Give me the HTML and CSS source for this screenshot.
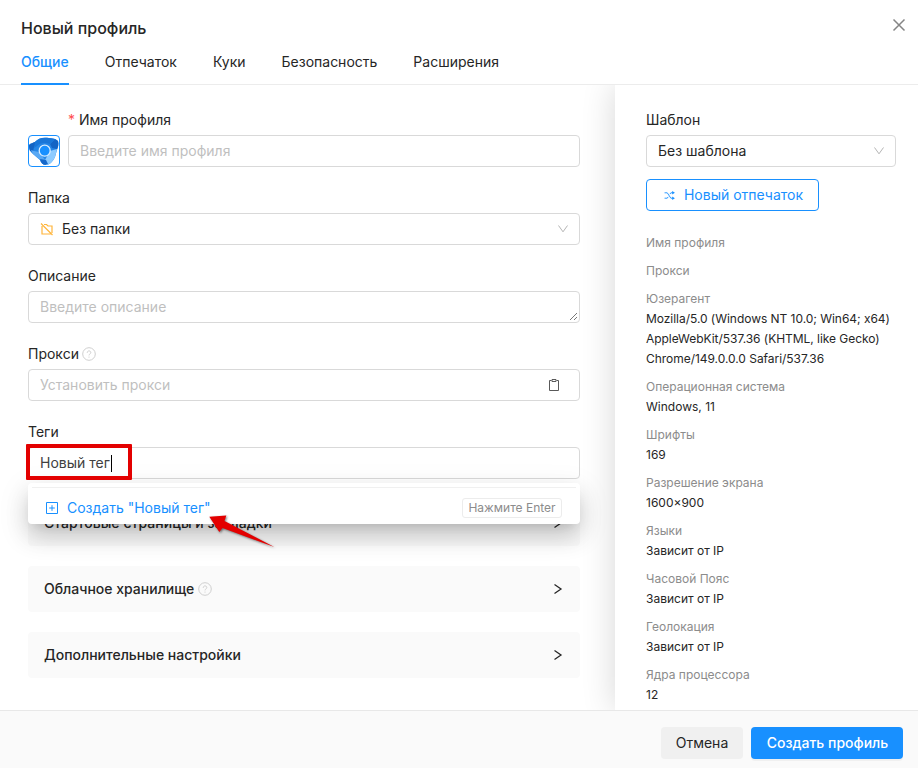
FILE: index.html
```html
<!DOCTYPE html>
<html lang="ru">
<head>
<meta charset="utf-8">
<title>Новый профиль</title>
<link rel="stylesheet" href="styles.css">
</head>
<body>
<div class="modal">
  <header class="header">
    <h1 class="title">Новый профиль</h1>
    <svg class="close" viewBox="0 0 14 14" width="14" height="14"><path d="M1.500 1.500l11 11M12.500 1.500l-11 11"/></svg>
    <nav class="tabs">
      <a class="tab active">Общие</a><a class="tab">Отпечаток</a><a class="tab">Куки</a><a class="tab">Безопасность</a><a class="tab">Расширения</a>
    </nav>
  </header>
  <div class="body">
    <main class="form">
      <div class="name-row">
        <div class="avatar">
          <svg viewBox="0 0 30 30" width="30" height="30">
            <path fill="#2586e6" d="M0 9C2 7 4 7 6 6 9 2 14 1 20 2c4 0 7 1 9 3 1 3 0 7-1 9l-2 7c-2 4-5 8-9 8-3 0-5-2-6-5l-7-6C1 16 0 12 0 9z"/>
            <path fill="#1464c4" d="M0 9c2-2 4-2 6-3l3-2-4 7-1 5-3-1C0 13 0 11 0 9zM21 8l5-5 3 2c1 3 0 6-1 8l-5-1z"/>
            <path fill="#1976d8" d="M6 6c3-4 8-5 14-4l6 1-5 5c-6-2-10-1-13 2l-3 2z"/>
            <path fill="#58a8f4" d="M2 14l3 1 5 1 4 5 3 4-6-1-7-6z"/>
            <path fill="#8ecbff" d="M21 15l7-2-2 8c-2 4-5 8-9 8l-1-5z"/>
            <path fill="#1668ca" d="M11 23l6 1 2 4c-4 2-7 0-8-5z"/>
            <circle cx="15.700" cy="14.700" r="5.500" fill="#1890ff" stroke="#d6ecff" stroke-width="1.300"/>
          </svg>
        </div>
        <div class="field grow">
          <label class="label"><span class="star">*</span>Имя профиля</label>
          <div class="input placeholder">Введите имя профиля</div>
        </div>
      </div>
      <div class="field">
        <label class="label">Папка</label>
        <div class="input">
          <svg class="folder" viewBox="0 0 14 14" width="14" height="14"><path d="M2 4v8h9.500M4 2.500h2.500L8 4h4v7M1 1.500l11.500 11.500"/></svg>
          <span class="grow">Без папки</span>
          <svg class="down" viewBox="0 0 12 12" width="12" height="12"><path d="M1.500 2.500L6 8.800l4.500-6.300"/></svg>
        </div>
      </div>
      <div class="field">
        <label class="label">Описание</label>
        <div class="input placeholder textarea">Введите описание
          <svg class="grip" viewBox="0 0 10 10" width="10" height="10"><path d="M1 8l7-7M5 8l3-3"/></svg>
        </div>
      </div>
      <div class="field">
        <label class="label">Прокси
          <svg class="help near" viewBox="0 0 14 14" width="14" height="14"><circle cx="7" cy="7" r="6.300"/><path d="M5.200 5.800C5.200 3.300 8.800 3.300 8.800 5.600 8.800 6.900 7 7 7 8.400M7 9.600v1"/></svg>
        </label>
        <div class="input placeholder"><span class="grow">Установить прокси</span>
          <svg class="clip" viewBox="0 0 12 14" width="12" height="14"><path d="M3.500 2.500h-2v10h9v-10h-2M4 1.500h4v2H4z"/></svg>
        </div>
      </div>
      <div class="field tags">
        <label class="label">Теги</label>
        <div class="input typed">Новый тег<i class="caret"></i></div>
        <div class="highlight"></div>
        <div class="dropdown">
          <div class="option">
            <svg class="plus" viewBox="0 0 14 14" width="14" height="14"><path d="M1.500 1.500h11v11h-11zM7 4.200v5.600M4.200 7h5.600"/></svg>
            <span class="grow">Создать "Новый тег"</span>
            <span class="key">Нажмите Enter</span>
          </div>
        </div>
        <svg class="arrow" viewBox="0 0 68 36" width="68" height="36"><path d="M1.300 3.700l17-1.200-1.800 5.500 49.800 26L14.500 15l-3.200 4z"/></svg>
      </div>
      <div class="panel first"><span class="grow">Стартовые страницы и закладки</span>
        <svg class="right" viewBox="0 0 10 12" width="10" height="12"><path d="M1.500 1.500l6.500 4.500-6.500 4.500"/></svg></div>
      <div class="panel"><span>Облачное хранилище</span>
        <svg class="help" viewBox="0 0 14 14" width="14" height="14"><circle cx="7" cy="7" r="6.300"/><path d="M5.200 5.800C5.200 3.300 8.800 3.300 8.800 5.600 8.800 6.900 7 7 7 8.400M7 9.600v1"/></svg>
        <span class="grow"></span>
        <svg class="right" viewBox="0 0 10 12" width="10" height="12"><path d="M1.500 1.500l6.500 4.500-6.500 4.500"/></svg></div>
      <div class="panel"><span class="grow">Дополнительные настройки</span>
        <svg class="right" viewBox="0 0 10 12" width="10" height="12"><path d="M1.500 1.500l6.500 4.500-6.500 4.500"/></svg></div>
    </main>
    <aside class="side">
      <label class="label">Шаблон</label>
      <div class="input"><span class="grow">Без шаблона</span>
        <svg class="down" viewBox="0 0 12 12" width="12" height="12"><path d="M1.500 2.500L6 8.800l4.500-6.300"/></svg>
      </div>
      <button class="btn fingerprint">
        <svg class="shuffle" viewBox="0 0 12 10" width="11" height="9"><path d="M.5 2h3l4 6H10M.5 8h3l1-1.500M6.500 3.500l1-1.500H10"/><path class="tip" d="M9 0l3 2-3 2zM9 6l3 2-3 2z"/></svg>
        Новый отпечаток</button>
      <dl class="summary">
        <div><dt>Имя профиля</dt></div>
        <div><dt>Прокси</dt></div>
        <div><dt>Юзерагент</dt><dd class="agent">Mozilla/5.0 (Windows NT 10.0; Win64; x64) AppleWebKit/537.36 (KHTML, like Gecko) Chrome/149.0.0.0 Safari/537.36</dd></div>
        <div><dt>Операционная система</dt><dd>Windows, 11</dd></div>
        <div><dt>Шрифты</dt><dd>169</dd></div>
        <div><dt>Разрешение экрана</dt><dd>1600×900</dd></div>
        <div><dt>Языки</dt><dd>Зависит от IP</dd></div>
        <div><dt>Часовой Пояс</dt><dd>Зависит от IP</dd></div>
        <div><dt>Геолокация</dt><dd>Зависит от IP</dd></div>
        <div><dt>Ядра процессора</dt><dd>12</dd></div>
      </dl>
    </aside>
  </div>
  <footer class="footer">
    <button class="btn cancel">Отмена</button>
    <button class="btn primary">Создать профиль</button>
  </footer>
</div>
</body>
</html>
```
FILE: styles.css
```css
* { box-sizing: border-box; }
body { margin: 0; font: 14px/22px Inter, "Noto Sans", sans-serif; color: #262626; background: #fff; }
svg { fill: none; stroke: currentColor; flex: none; }
.modal { width: 918px; height: 768px; display: flex; flex-direction: column; overflow: hidden; }
.grow { flex: 1; min-width: 0; }

.header { position: relative; height: 85px; padding: 17px 21px 0; border-bottom: 1px solid #ececec; flex: none; }
.title { margin: 0; font-size: 16px; line-height: 22px; font-weight: 500; }
.close { position: absolute; right: 12px; top: 18px; color: #858585; stroke-width: 1.5; }
.tabs { display: flex; gap: 36px; margin-top: 12px; }
.tab { height: 34px; line-height: 22px; }
.active { color: #1890ff; font-weight: 500; border-bottom: 2px solid #1890ff; }

.body { flex: 1; display: flex; min-height: 0; overflow: hidden; }
.form { width: 615px; padding: 24px 35px 0 28px; flex: none; }
.field { margin-bottom: 20px; }
.name-row { display: flex; align-items: flex-start; gap: 8px; }
.avatar { width: 32px; height: 32px; margin-top: 26px; border: 1px solid #1890ff; border-radius: 4px; overflow: hidden; }
.avatar svg { display: block; stroke: none; }
.label { display: flex; align-items: center; height: 22px; margin-bottom: 4px; gap: 4px; }
.star { color: #ff4d4f; }
.input { display: flex; align-items: center; height: 32px; padding: 0 11px; border: 1px solid #d9d9d9; border-radius: 4px; background: #fff; }
.placeholder { color: #bfbfbf; }
.folder { color: #ffb53c; margin-right: 8px; stroke-width: 1.2; }
.down { color: #b5b5b5; margin-right: -1px; }
.help { color: #cfcfcf; }
.near { margin-left: -1px; }
.textarea { position: relative; }
.grip { position: absolute; right: 0; bottom: 0; color: #555; stroke-width: .8; }
.clip { color: #595959; margin-right: 8px; }
.tags { position: relative; margin-bottom: 21px; }
.typed { color: #404040; }
.caret { width: 1px; height: 17px; margin-left: 1px; background: #000; }
.highlight { position: absolute; left: -2px; top: 23px; width: 106px; height: 36px; border: 4px solid #e30000; border-radius: 1px; z-index: 3; }
.dropdown { position: absolute; left: 0; top: 62px; width: 552px; height: 41px; padding: 4px; border-radius: 4px; background: #fff; z-index: 2;
  box-shadow: 0 6px 12px -6px rgba(0,0,0,.12), 0 12px 24px -2px rgba(0,0,0,.2), 0 9px 28px 8px rgba(0,0,0,.05); }
.option { display: flex; align-items: center; height: 37px; padding: 4px 14px 0 13px; border-top: 1px solid #f0f0f0; color: #1890ff; }
.plus { margin-right: 8px; }
.key { font-size: 12px; line-height: 18px; width: 100px; text-align: center; white-space: nowrap; border: 1px solid #ececec; border-radius: 3px; color: #8c8c8c; }
.arrow { position: absolute; left: 180px; top: 92px; z-index: 4; fill: #e30000; stroke: none; overflow: visible; filter: drop-shadow(1px 1px 1px rgba(0,0,0,.5)); }
.panel { display: flex; align-items: center; gap: 4px; height: 46px; padding: 0 17px 0 16px; margin-bottom: 20px; border-radius: 4px; background: #fafafa; font-weight: 500; }
.first { letter-spacing: .04px; }
.right { stroke-width: 1.3; }

.side { width: 303px; padding: 24px 22px 0 31px; background: #fff; box-shadow: 0 0 32px rgba(0,0,0,.16); position: relative; z-index: 1; }
.btn { display: flex; align-items: center; justify-content: center; height: 32px; padding: 0 15px; border-radius: 4px; border: 1px solid transparent; font: inherit; color: inherit; white-space: nowrap; }
.fingerprint { width: 173px; margin-top: 12px; gap: 9px; padding-left: 17px; color: #1890ff; border-color: #1890ff; background: #fff; }
.tip { fill: currentColor; stroke: none; }
.summary { margin: 22px 0 0; font-size: 12px; line-height: 20px; }
.summary div { margin-bottom: 8px; }
.summary dt { color: #8c8c8c; }
.summary dd { margin: 0; }
.summary .agent { letter-spacing: -.04px; }

.footer { position: relative; z-index: 5; display: flex; justify-content: flex-end; gap: 8px; height: 58px; padding: 16px 15px 0; background: #fafafa; border-top: 1px solid #e8e8e8; flex: none; }
.cancel { width: 82px; background: #f0f0f0; }
.primary { width: 152px; padding-left: 16px; background: #1890ff; color: #fff; font-weight: 500; box-shadow: 0 2px 0 rgba(0,0,0,.04); }
```
